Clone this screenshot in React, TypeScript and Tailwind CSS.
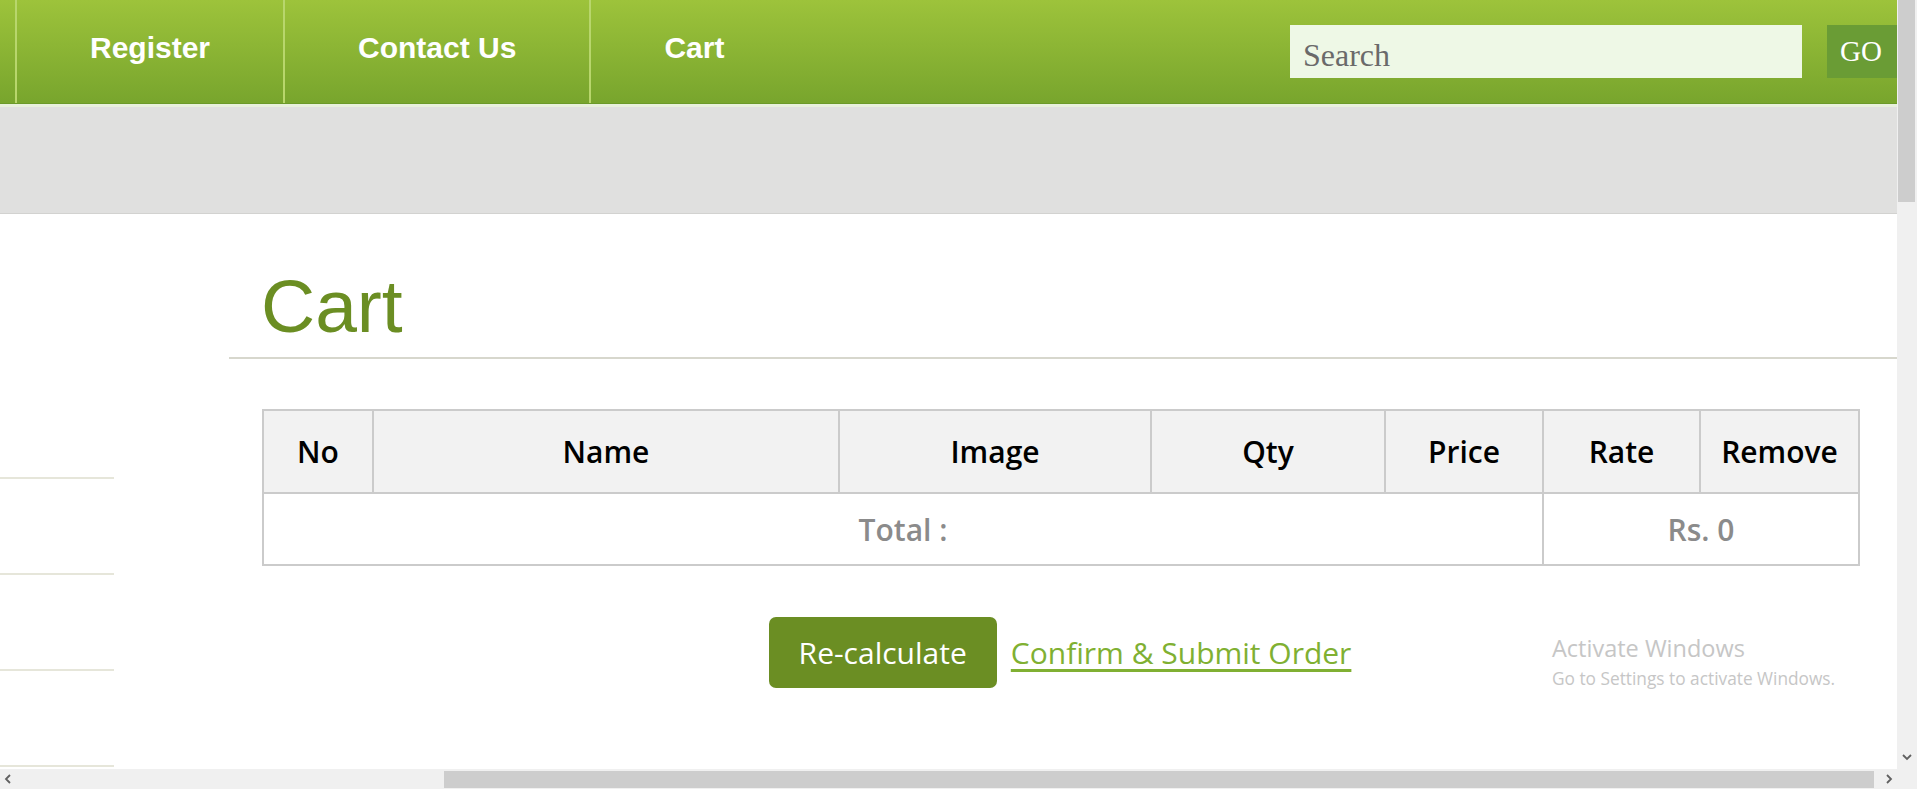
import React from 'react';

const navItems = ['Register', 'Contact Us', 'Cart'];
const columns = [
    { label: 'No', width: 110 },
    { label: 'Name', width: 466 },
    { label: 'Image', width: 312 },
    { label: 'Qty', width: 234 },
    { label: 'Price', width: 158 },
    { label: 'Rate', width: 157 },
    { label: 'Remove', width: 159 },
];

const Chevron: React.FC<{ dir: 'left' | 'right' | 'down' }> = ({ dir }) => {
    const points = dir === 'left' ? '6,1 2,5 6,9' : dir === 'right' ? '3,1 7,5 3,9' : '1,3 5,7 9,3';
    return (
        <svg width="10" height="10" viewBox="0 0 10 10">
            <polyline points={points} fill="none" stroke="#606060" strokeWidth="1.8" />
        </svg>
    );
};

const TopNav: React.FC = () => (
    <header className="flex flex-col">
        <div className="h-[103px] flex bg-linear-to-b from-[#9dc33b] to-[#78a52d]">
            <ul className="flex ml-[15px]">
                {navItems.map(item => (
                    <li key={item} className="border-l-2 border-[#b8d66c] px-[73px] pt-[33px]">
                        <a href="#" className="block text-white font-bold text-[30px] leading-[30px] font-['Liberation_Sans',Arial,sans-serif]">
                            {item}
                        </a>
                    </li>
                ))}
            </ul>
            <div className="ml-auto flex items-start pt-[25px]">
                <div className="w-[512px] h-[53px] bg-[#eef8e6] flex items-center pl-[13px] pt-[6px]">
                    <span className="text-[32px] leading-none text-[#6a6a6a] font-['Liberation_Serif',Georgia,serif]">Search</span>
                </div>
                <button className="ml-[25px] w-[70px] h-[53px] bg-[#6a9c35] text-white text-[29px] leading-none text-left pl-[13px] font-['Liberation_Serif',Georgia,serif]">
                    GO
                </button>
            </div>
        </div>
        <div className="h-px bg-[#6b9a29]"></div>
        <div className="h-[3px] bg-[#e8f0dc]"></div>
    </header>
);

const CartTable: React.FC = () => (
    <table className="table-fixed border-collapse w-[1596px] font-['Open_Sans',sans-serif]">
        <colgroup>
            {columns.map(c => <col key={c.label} style={{ width: c.width }} />)}
        </colgroup>
        <thead>
            <tr>
                {columns.map(c => (
                    <th key={c.label} className="h-[83px] bg-[#f2f2f2] border-2 border-[#cbcbcb] text-[30px] font-semibold text-black text-center">
                        {c.label}
                    </th>
                ))}
            </tr>
        </thead>
        <tbody>
            <tr>
                <td colSpan={5} className="h-[72px] border-2 border-[#cbcbcb] text-center text-[30px] font-semibold text-[#8b8b8b]">Total :</td>
                <td colSpan={2} className="h-[72px] border-2 border-[#cbcbcb] text-center text-[30px] font-semibold text-[#8b8b8b]">Rs. 0</td>
            </tr>
        </tbody>
    </table>
);

const App: React.FC = () => {
    return (
        <div className="relative w-[1917px] h-[789px] flex overflow-hidden bg-white">
            <div className="w-[1897px] flex flex-col">
                <div className="flex-1 overflow-hidden">
                    <TopNav />
                    <div className="h-[107px] bg-[#e0e0df] border-b border-[#d2d2d0]"></div>
                    <div className="flex">
                        {/* side categories, scrolled mostly out of view */}
                        <aside className="w-[114px] pt-[169px] shrink-0">
                            {[0, 1, 2, 3].map(i => (
                                <div key={i} className="h-[96px] border-b-2 border-[#e6e6da]"></div>
                            ))}
                        </aside>
                        <main className="ml-[115px] flex-1">
                            <h1 className="mt-[55px] pl-[32px] text-[75px] leading-none text-[#6b8e23] font-['Liberation_Sans',Arial,sans-serif]">Cart</h1>
                            <div className="mt-[13px] h-[2px] bg-[#d7d7cd]"></div>
                            <div className="ml-[33px] mt-[50px]">
                                <CartTable />
                                <div className="w-[1596px] mt-[51px] flex justify-center items-center gap-[14px] font-['Open_Sans',sans-serif]">
                                    <button className="h-[71px] px-[30px] rounded-[7px] bg-[#6b8e23] text-white text-[30px]">Re-calculate</button>
                                    <a href="#" className="text-[30px] text-[#80b032] underline underline-offset-[5px]">Confirm &amp; Submit Order</a>
                                </div>
                            </div>
                        </main>
                    </div>
                </div>
                <div className="h-[20px] bg-[#f0f0f0] flex items-center">
                    <div className="w-[17px] flex justify-center"><Chevron dir="left" /></div>
                    <div className="w-[427px]"></div>
                    <div className="w-[1430px] h-[17px] bg-[#cdcdcd]"></div>
                    <div className="flex-1"></div>
                    <div className="w-[17px] flex justify-center"><Chevron dir="right" /></div>
                </div>
            </div>
            <div className="w-[20px] h-full bg-[#f0f0f0] flex flex-col">
                <div className="h-[202px] ml-[1px] w-[17px] bg-[#cdcdcd]"></div>
                <div className="flex-1"></div>
                <div className="h-[18px] flex items-center justify-center"><Chevron dir="down" /></div>
                <div className="h-[23px]"></div>
            </div>
            <div className="absolute left-[1552px] top-[637px] text-[#c6c6c6] font-['Open_Sans',sans-serif] pointer-events-none">
                <div className="text-[23.5px] leading-none">Activate Windows</div>
                <div className="mt-[9px] text-[17.3px] leading-none">Go to Settings to activate Windows.</div>
            </div>
        </div>
    );
};

export default App;
